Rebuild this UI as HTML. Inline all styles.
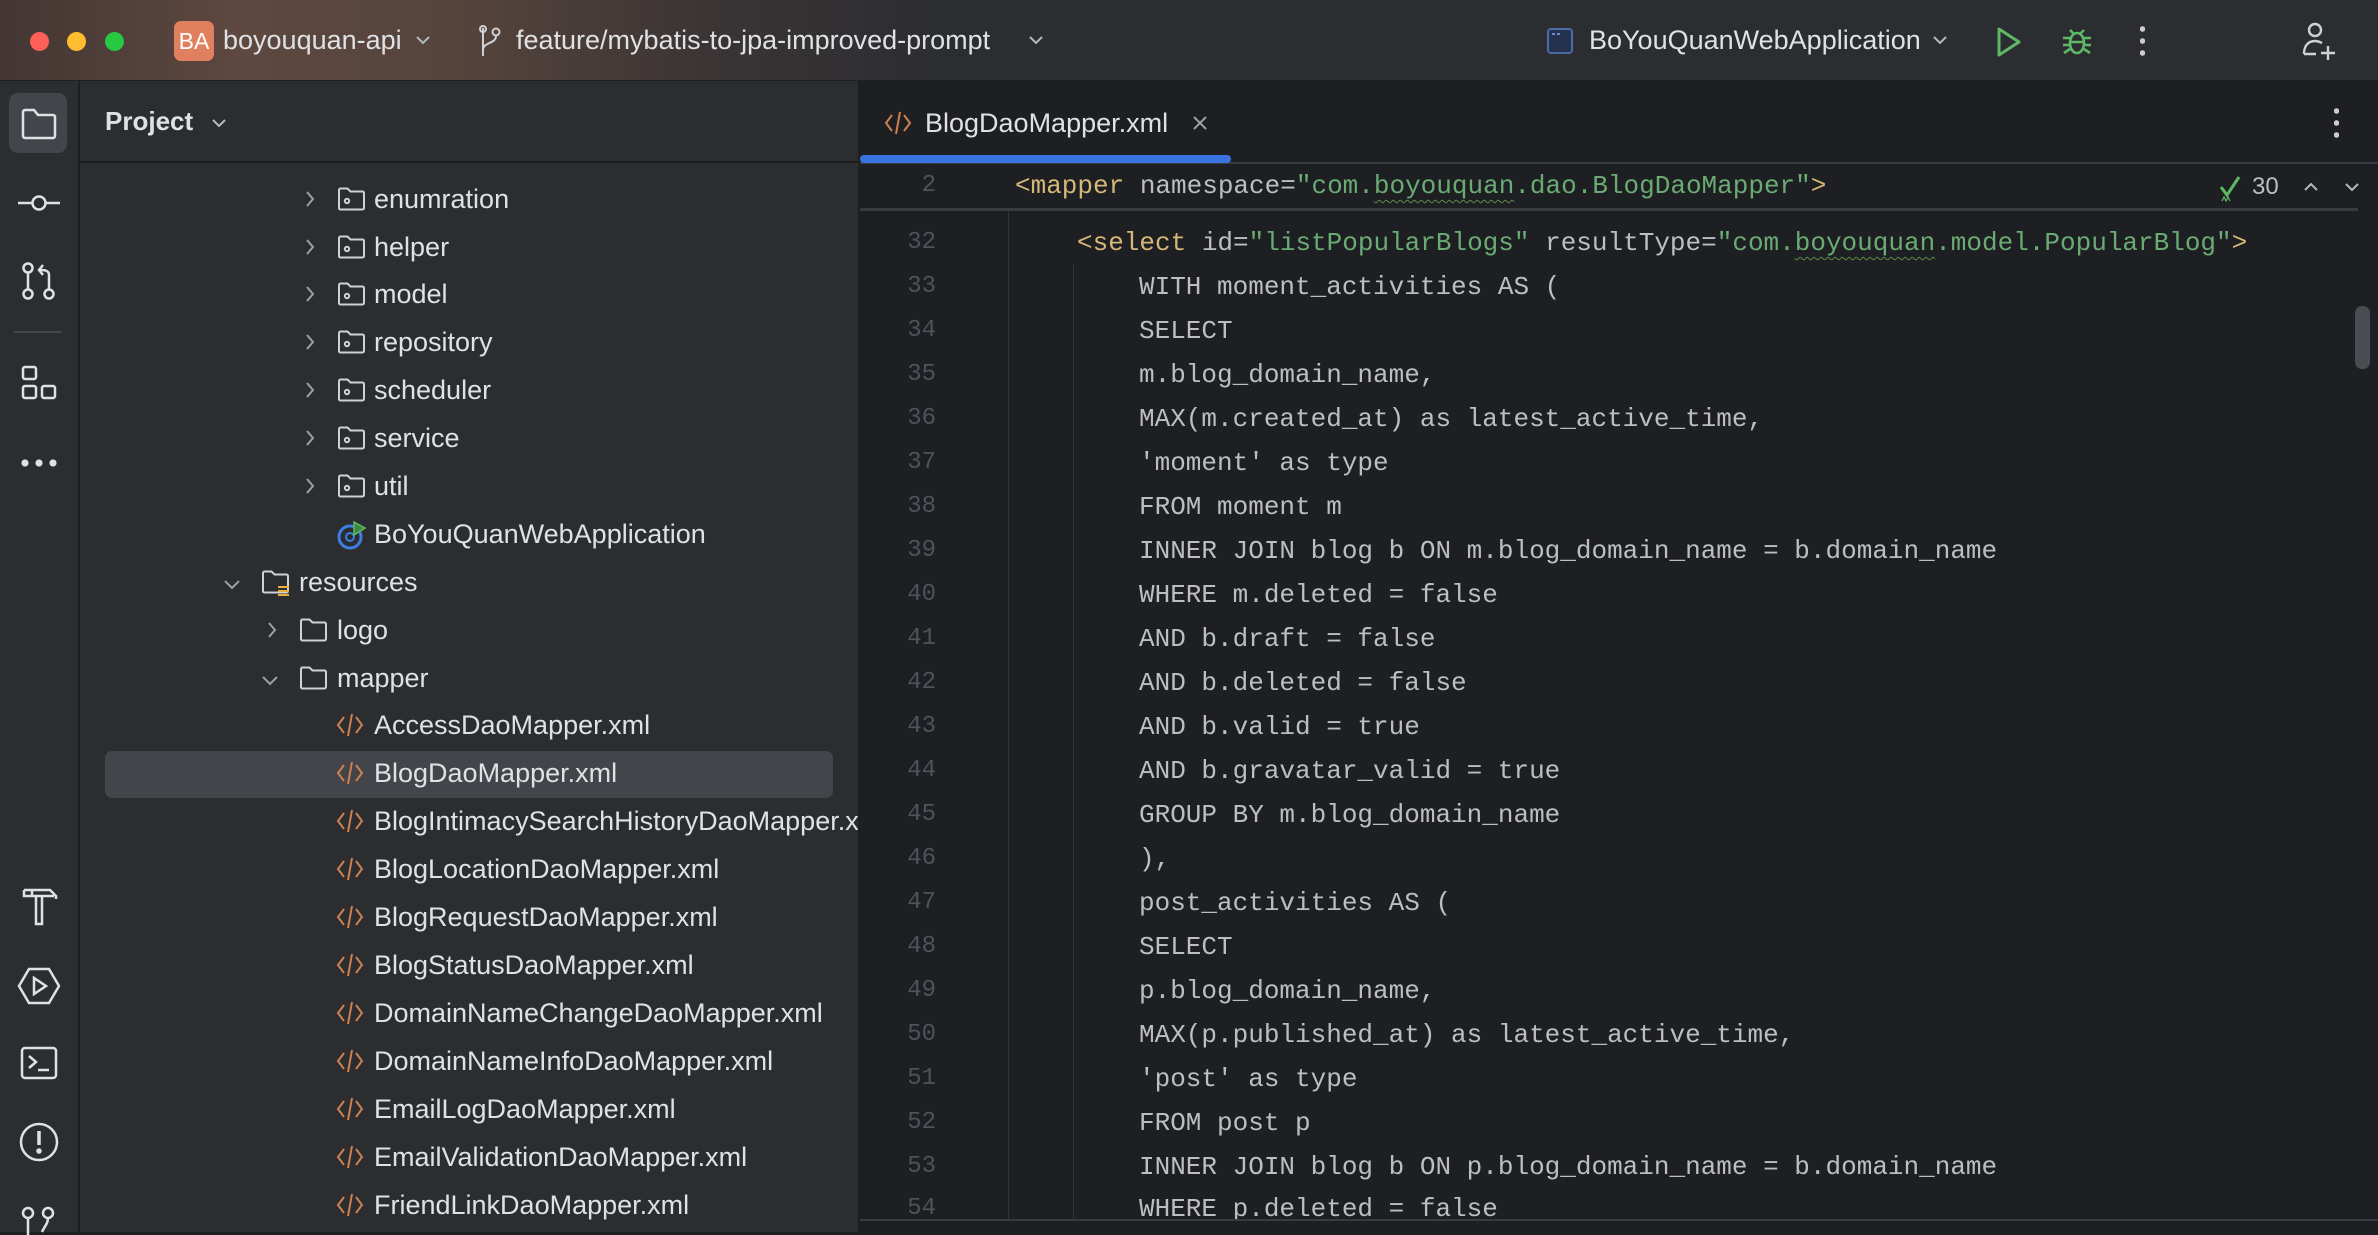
<!DOCTYPE html>
<html><head><meta charset="utf-8"><style>
*{margin:0;padding:0;box-sizing:border-box}
body{width:2378px;height:1232px;overflow:hidden;background:#1e1f22;font-family:"Liberation Sans",sans-serif;color:#dfe1e5;position:relative}
.abs{position:absolute}
#title{left:0;top:0;width:2378px;height:80px;background:linear-gradient(90deg,#433633 0%,#5e4840 10%,#54433c 20%,#3a3434 30%,#2b2d30 40%,#2b2d30 100%)}
.tl{position:absolute;top:32px;width:19px;height:19px;border-radius:50%}
.tt{position:absolute;font-size:27px;color:#dfe1e5;line-height:30px;top:25px;white-space:nowrap}
#strip{left:0;top:81px;width:79px;height:1151px;background:#2b2d30;border-right:1px solid #1e1f22}
#panel{left:80px;top:81px;width:778px;height:1151px;background:#2b2d30}
.row{position:absolute;font-size:27px;line-height:48px;height:48px;white-space:nowrap;color:#dfe1e5}
.code{position:absolute;font-family:"Liberation Mono",monospace;font-size:26px;line-height:44px;height:44px;white-space:pre;color:#bcbec4}
.ln{position:absolute;font-family:"Liberation Mono",monospace;font-size:24px;line-height:44px;height:44px;color:#4e535b;width:80px;text-align:right;left:856px}
.tag{color:#d5b778}.str{color:#6aab73}
.sq{text-decoration:underline wavy #5f8b4c;text-underline-offset:6px;text-decoration-thickness:1px}
</style></head><body>
<div id="title" class="abs">
 <div class="tl" style="left:30px;background:#fe5f57"></div>
 <div class="tl" style="left:67px;background:#febc2e"></div>
 <div class="tl" style="left:105px;background:#28c840"></div>
 <div class="abs" style="left:174px;top:21px;width:40px;height:40px;border-radius:7px;background:#e0805e;color:#fff;font-size:23px;line-height:40px;text-align:center">BA</div>
 <div class="tt" style="left:223px">boyouquan-api</div>
 <svg class="abs" style="left:414px;top:33px" width="18" height="14"><path d="M3 4l6 6 6-6" stroke="#b4b8bf" stroke-width="2" fill="none"/></svg>
 <svg class="abs" style="left:476px;top:24px" width="30" height="34" fill="none" stroke="#cfd1d6" stroke-width="2"><path d="M7 4v28"/><circle cx="7" cy="5" r="3"/><circle cx="20" cy="8" r="3.5"/><path d="M20 12c0 8-13 6-13 14"/></svg>
 <div class="tt" style="left:516px">feature/mybatis-to-jpa-improved-prompt</div>
 <svg class="abs" style="left:1027px;top:33px" width="18" height="14"><path d="M3 4l6 6 6-6" stroke="#b4b8bf" stroke-width="2" fill="none"/></svg>
 <svg class="abs" style="left:1546px;top:27px" width="28" height="28"><rect x="2" y="2" width="24" height="24" rx="3" fill="#25324d" stroke="#4a6aa8" stroke-width="2"/><rect x="6" y="6" width="3" height="2" fill="#6d8ccc"/><rect x="11" y="6" width="3" height="2" fill="#6d8ccc"/></svg>
 <div class="tt" style="left:1589px">BoYouQuanWebApplication</div>
 <svg class="abs" style="left:1931px;top:33px" width="18" height="14"><path d="M3 4l6 6 6-6" stroke="#b4b8bf" stroke-width="2" fill="none"/></svg>
 <svg class="abs" style="left:1994px;top:26px" width="30" height="32"><path d="M5 3l20 13L5 29z" stroke="#5fb865" stroke-width="3" fill="none" stroke-linejoin="round"/></svg>
 <svg class="abs" style="left:2060px;top:24px" width="34" height="34" fill="none" stroke="#5fb865" stroke-width="2.6"><ellipse cx="17" cy="19" rx="7" ry="10"/><path d="M10 6l4 4M24 6l-4 4M3 14h7M24 14h7M3 21h7M24 21h7M4 29l6-4M30 29l-6-4M10 18h14"/></svg>
 <div class="abs" style="left:2140px;top:26px;width:5px;height:30px;background:radial-gradient(circle at 2.5px 3px,#ccc 2.5px,transparent 3px),radial-gradient(circle at 2.5px 15px,#ccc 2.5px,transparent 3px),radial-gradient(circle at 2.5px 27px,#ccc 2.5px,transparent 3px)"></div>
 <svg class="abs" style="left:2300px;top:20px" width="40" height="42" fill="none" stroke="#cfd1d6" stroke-width="2.4"><circle cx="15" cy="10" r="6"/><path d="M4 34c0-8 4-13 11-13 3 0 5 1 7 2M4 34h12M28 26v14M21 33h14"/></svg>
</div>
<div class="abs" style="left:0;top:80px;width:2378px;height:1px;background:#1e1f22"></div>

<div id="strip" class="abs">
 <div class="abs" style="left:9px;top:12px;width:58px;height:60px;border-radius:9px;background:#43454a"></div>
 <svg class="abs" style="left:20px;top:26px" width="38" height="34" fill="none" stroke="#dfe1e5" stroke-width="2.5"><path d="M3 5a2 2 0 012-2h9l4 5h15a2 2 0 012 2v19a2 2 0 01-2 2H5a2 2 0 01-2-2z"/></svg>
 <svg class="abs" style="left:17px;top:110px" width="44" height="24" fill="none" stroke="#dfe1e5" stroke-width="2.5"><circle cx="22" cy="12" r="6.5"/><path d="M1 12h14M29 12h14"/></svg>
 <svg class="abs" style="left:20px;top:180px" width="38" height="40" fill="none" stroke="#dfe1e5" stroke-width="2.5"><circle cx="8" cy="7" r="4.5"/><circle cx="8" cy="33" r="4.5"/><circle cx="29" cy="33" r="4.5"/><path d="M8 12v16M29 28v-14c0-4-3-5-8-5h-1M23 4l-4 5 4 5"/></svg>
 <div class="abs" style="left:14px;top:250px;width:48px;height:2px;background:#43454a"></div>
 <svg class="abs" style="left:20px;top:283px" width="38" height="40" fill="none" stroke="#dfe1e5" stroke-width="2.5"><rect x="3" y="3" width="13" height="12" rx="2"/><rect x="3" y="22" width="13" height="12" rx="2"/><rect x="22" y="22" width="13" height="12" rx="2"/></svg>
 <div class="abs" style="left:21px;top:378px;width:36px;height:8px;background:radial-gradient(circle at 4px 4px,#dfe1e5 3.3px,transparent 3.8px) 0 0/14px 8px repeat-x"></div>
 <svg class="abs" style="left:20px;top:805px" width="40" height="40" fill="none" stroke="#dfe1e5" stroke-width="2.5"><path d="M4 4h26l6 6v3M4 4v6h8M12 4v6M16 10v28h6V10M12 10h22"/></svg>
 <svg class="abs" style="left:17px;top:885px" width="44" height="40" fill="none" stroke="#dfe1e5" stroke-width="2.5"><path d="M12 3h20l10 17-10 17H12L2 20z"/><path d="M17 12v16l12-8z"/></svg>
 <svg class="abs" style="left:19px;top:963px" width="40" height="40" fill="none" stroke="#dfe1e5" stroke-width="2.5"><rect x="3" y="4" width="34" height="30" rx="3"/><path d="M10 12l7 6-7 6M19 26h11"/></svg>
 <svg class="abs" style="left:18px;top:1040px" width="42" height="42" fill="none" stroke="#dfe1e5" stroke-width="2.5"><circle cx="21" cy="21" r="18"/><path d="M21 10v14" stroke-width="3.5"/><circle cx="21" cy="30" r="1.5" fill="#dfe1e5"/></svg>
 <svg class="abs" style="left:20px;top:1124px" width="40" height="30" fill="none" stroke="#dfe1e5" stroke-width="2.5"><circle cx="8" cy="8" r="5"/><circle cx="28" cy="8" r="5"/><path d="M8 13v17M28 13c0 6-4 9-6 14"/></svg>
</div>

<div id="panel" class="abs">
 <div class="abs" style="left:25px;top:25px;font-size:26px;font-weight:bold;color:#dfe1e5">Project</div>
 <svg class="abs" style="left:130px;top:35px" width="18" height="14"><path d="M3 4l6 6 6-6" stroke="#b4b8bf" stroke-width="2" fill="none"/></svg>
 <div class="abs" style="left:0;top:80px;width:778px;height:2px;background:#1e1f22"></div>
</div>

<div id="tree">
<svg width="0" height="0" style="position:absolute"><defs>
<g id="pkg" fill="none" stroke="#cfd1d6" stroke-width="2"><path d="M2 4a1.5 1.5 0 011.5-1.5h7l3 3h12a1.5 1.5 0 011.5 1.5v15a1.5 1.5 0 01-1.5 1.5H3.5A1.5 1.5 0 012 21.5z"/><circle cx="10" cy="15" r="2.2"/></g>
<g id="fld" fill="none" stroke="#cfd1d6" stroke-width="2"><path d="M2 4a1.5 1.5 0 011.5-1.5h7l3 3h12a1.5 1.5 0 011.5 1.5v15a1.5 1.5 0 01-1.5 1.5H3.5A1.5 1.5 0 012 21.5z"/></g>
<g id="xml" fill="none" stroke="#d08050" stroke-width="2"><path d="M8 5l-6 8 6 8M20 5l6 8-6 8M16 2l-4 22"/></g>
<g id="cr" fill="none" stroke="#9da0a8" stroke-width="2"><path d="M5 2l6 7-6 7"/></g>
<g id="cd" fill="none" stroke="#9da0a8" stroke-width="2"><path d="M1 5l7 7 7-7"/></g>
</defs></svg>

<div class="abs" style="left:105px;top:751px;width:728px;height:47px;border-radius:7px;background:#43454a"></div>

<svg class="abs" style="left:302px;top:190px" width="16" height="18"><use href="#cr"/></svg><svg class="abs" style="left:337px;top:186px" width="30" height="26"><use href="#pkg"/></svg><div class="row" style="left:374px;top:175px">enumration</div>
<svg class="abs" style="left:302px;top:238px" width="16" height="18"><use href="#cr"/></svg><svg class="abs" style="left:337px;top:234px" width="30" height="26"><use href="#pkg"/></svg><div class="row" style="left:374px;top:223px">helper</div>
<svg class="abs" style="left:302px;top:285px" width="16" height="18"><use href="#cr"/></svg><svg class="abs" style="left:337px;top:281px" width="30" height="26"><use href="#pkg"/></svg><div class="row" style="left:374px;top:270px">model</div>
<svg class="abs" style="left:302px;top:333px" width="16" height="18"><use href="#cr"/></svg><svg class="abs" style="left:337px;top:329px" width="30" height="26"><use href="#pkg"/></svg><div class="row" style="left:374px;top:318px">repository</div>
<svg class="abs" style="left:302px;top:381px" width="16" height="18"><use href="#cr"/></svg><svg class="abs" style="left:337px;top:377px" width="30" height="26"><use href="#pkg"/></svg><div class="row" style="left:374px;top:366px">scheduler</div>
<svg class="abs" style="left:302px;top:429px" width="16" height="18"><use href="#cr"/></svg><svg class="abs" style="left:337px;top:425px" width="30" height="26"><use href="#pkg"/></svg><div class="row" style="left:374px;top:414px">service</div>
<svg class="abs" style="left:302px;top:477px" width="16" height="18"><use href="#cr"/></svg><svg class="abs" style="left:337px;top:473px" width="30" height="26"><use href="#pkg"/></svg><div class="row" style="left:374px;top:462px">util</div>
<svg class="abs" style="left:336px;top:519px" width="32" height="32"><circle cx="14" cy="18" r="11" fill="none" stroke="#3d7ee0" stroke-width="3"/><circle cx="14" cy="18" r="4" fill="none" stroke="#3d7ee0" stroke-width="2"/><path d="M18 3l11 6-11 7z" fill="#3b8a3f" stroke="#5fb865" stroke-width="1.5"/></svg><div class="row" style="left:374px;top:510px">BoYouQuanWebApplication</div>
<svg class="abs" style="left:224px;top:576px" width="16" height="16"><use href="#cd"/></svg><svg class="abs" style="left:261px;top:569px" width="32" height="28"><use href="#fld"/><path d="M17 18h11M17 22h11M17 26h11" stroke="#e6b03c" stroke-width="2"/></svg><div class="row" style="left:299px;top:558px">resources</div>
<svg class="abs" style="left:264px;top:621px" width="16" height="18"><use href="#cr"/></svg><svg class="abs" style="left:299px;top:617px" width="30" height="26"><use href="#fld"/></svg><div class="row" style="left:337px;top:606px">logo</div>
<svg class="abs" style="left:262px;top:672px" width="16" height="16"><use href="#cd"/></svg><svg class="abs" style="left:299px;top:665px" width="30" height="26"><use href="#fld"/></svg><div class="row" style="left:337px;top:654px">mapper</div>

<svg class="abs" style="left:336px;top:712px" width="30" height="26"><use href="#xml"/></svg><div class="row" style="left:374px;top:701px">AccessDaoMapper.xml</div>
<svg class="abs" style="left:336px;top:760px" width="30" height="26"><use href="#xml"/></svg><div class="row" style="left:374px;top:749px">BlogDaoMapper.xml</div>
<div style="position:absolute;left:0;top:0;width:858px;height:1232px;overflow:hidden">
<svg class="abs" style="left:336px;top:808px" width="30" height="26"><use href="#xml"/></svg><div class="row" style="left:374px;top:797px">BlogIntimacySearchHistoryDaoMapper.xml</div>
</div>
<svg class="abs" style="left:336px;top:856px" width="30" height="26"><use href="#xml"/></svg><div class="row" style="left:374px;top:845px">BlogLocationDaoMapper.xml</div>
<svg class="abs" style="left:336px;top:904px" width="30" height="26"><use href="#xml"/></svg><div class="row" style="left:374px;top:893px">BlogRequestDaoMapper.xml</div>
<svg class="abs" style="left:336px;top:952px" width="30" height="26"><use href="#xml"/></svg><div class="row" style="left:374px;top:941px">BlogStatusDaoMapper.xml</div>
<svg class="abs" style="left:336px;top:1000px" width="30" height="26"><use href="#xml"/></svg><div class="row" style="left:374px;top:989px">DomainNameChangeDaoMapper.xml</div>
<svg class="abs" style="left:336px;top:1048px" width="30" height="26"><use href="#xml"/></svg><div class="row" style="left:374px;top:1037px">DomainNameInfoDaoMapper.xml</div>
<svg class="abs" style="left:336px;top:1096px" width="30" height="26"><use href="#xml"/></svg><div class="row" style="left:374px;top:1085px">EmailLogDaoMapper.xml</div>
<svg class="abs" style="left:336px;top:1144px" width="30" height="26"><use href="#xml"/></svg><div class="row" style="left:374px;top:1133px">EmailValidationDaoMapper.xml</div>
<svg class="abs" style="left:336px;top:1192px" width="30" height="26"><use href="#xml"/></svg><div class="row" style="left:374px;top:1181px">FriendLinkDaoMapper.xml</div>
</div>

<div class="abs" style="left:858px;top:81px;width:2px;height:1151px;background:#1e1f22"></div>
<svg class="abs" style="left:884px;top:110px" width="30" height="26"><use href="#xml"/></svg>
<div class="abs" style="left:925px;top:107px;font-size:27px;line-height:32px;color:#dfe1e5">BlogDaoMapper.xml</div>
<svg class="abs" style="left:1191px;top:114px" width="18" height="18"><path d="M3 3l12 12M15 3L3 15" stroke="#9da0a8" stroke-width="2"/></svg>
<div class="abs" style="left:2334px;top:108px;width:5px;height:30px;background:radial-gradient(circle at 2.5px 3px,#ccc 2.5px,transparent 3px),radial-gradient(circle at 2.5px 15px,#ccc 2.5px,transparent 3px),radial-gradient(circle at 2.5px 27px,#ccc 2.5px,transparent 3px)"></div>
<div class="abs" style="left:860px;top:162px;width:1518px;height:2px;background:#393b40"></div>
<div class="abs" style="left:860px;top:155px;width:371px;height:8px;border-radius:4px;background:#3b74e0"></div>

<div class="ln" style="top:164px">2</div>
<div class="code" style="left:1015px;top:164px"><span class="tag">&lt;mapper</span> namespace=<span class="str">"com.<span class="sq">boyouquan</span>.dao.BlogDaoMapper"</span><span class="tag">&gt;</span></div>
<svg class="abs" style="left:2218px;top:174px" width="26" height="30"><path d="M3 13l6 8L21 3" stroke="#5fb865" stroke-width="3" fill="none"/><path d="M4 27l2-4 2 4 2-4 2 4" stroke="#5fb865" stroke-width="1.2" fill="none"/></svg>
<div class="abs" style="left:2252px;top:172px;font-size:24px;line-height:30px;color:#bcbec4">30</div>
<svg class="abs" style="left:2302px;top:180px" width="18" height="14"><path d="M3 10l6-6 6 6" stroke="#b4b8bf" stroke-width="2" fill="none"/></svg>
<svg class="abs" style="left:2343px;top:180px" width="18" height="14"><path d="M3 4l6 6 6-6" stroke="#b4b8bf" stroke-width="2" fill="none"/></svg>
<div class="abs" style="left:860px;top:208px;width:1498px;height:3px;background:#393b40"></div>

<div class="abs" style="left:1008px;top:211px;width:1px;height:1009px;background:#313338"></div>
<div class="abs" style="left:1073px;top:265px;width:1px;height:955px;background:#313338"></div>

<div class="ln" style="top:221px">32</div><div class="code" style="left:1077px;top:221px"><span class="tag">&lt;select</span> id=<span class="str">"listPopularBlogs"</span> resultType=<span class="str">"com.<span class="sq">boyouquan</span>.model.PopularBlog"</span><span class="tag">&gt;</span></div>
<div class="ln" style="top:265px">33</div><div class="code" style="left:1139px;top:265px">WITH moment_activities AS (</div>
<div class="ln" style="top:309px">34</div><div class="code" style="left:1139px;top:309px">SELECT</div>
<div class="ln" style="top:353px">35</div><div class="code" style="left:1139px;top:353px">m.blog_domain_name,</div>
<div class="ln" style="top:397px">36</div><div class="code" style="left:1139px;top:397px">MAX(m.created_at) as latest_active_time,</div>
<div class="ln" style="top:441px">37</div><div class="code" style="left:1139px;top:441px">'moment' as type</div>
<div class="ln" style="top:485px">38</div><div class="code" style="left:1139px;top:485px">FROM moment m</div>
<div class="ln" style="top:529px">39</div><div class="code" style="left:1139px;top:529px">INNER JOIN blog b ON m.blog_domain_name = b.domain_name</div>
<div class="ln" style="top:573px">40</div><div class="code" style="left:1139px;top:573px">WHERE m.deleted = false</div>
<div class="ln" style="top:617px">41</div><div class="code" style="left:1139px;top:617px">AND b.draft = false</div>
<div class="ln" style="top:661px">42</div><div class="code" style="left:1139px;top:661px">AND b.deleted = false</div>
<div class="ln" style="top:705px">43</div><div class="code" style="left:1139px;top:705px">AND b.valid = true</div>
<div class="ln" style="top:749px">44</div><div class="code" style="left:1139px;top:749px">AND b.gravatar_valid = true</div>
<div class="ln" style="top:793px">45</div><div class="code" style="left:1139px;top:793px">GROUP BY m.blog_domain_name</div>
<div class="ln" style="top:837px">46</div><div class="code" style="left:1139px;top:837px">),</div>
<div class="ln" style="top:881px">47</div><div class="code" style="left:1139px;top:881px">post_activities AS (</div>
<div class="ln" style="top:925px">48</div><div class="code" style="left:1139px;top:925px">SELECT</div>
<div class="ln" style="top:969px">49</div><div class="code" style="left:1139px;top:969px">p.blog_domain_name,</div>
<div class="ln" style="top:1013px">50</div><div class="code" style="left:1139px;top:1013px">MAX(p.published_at) as latest_active_time,</div>
<div class="ln" style="top:1057px">51</div><div class="code" style="left:1139px;top:1057px">'post' as type</div>
<div class="ln" style="top:1101px">52</div><div class="code" style="left:1139px;top:1101px">FROM post p</div>
<div class="ln" style="top:1145px">53</div><div class="code" style="left:1139px;top:1145px">INNER JOIN blog b ON p.blog_domain_name = b.domain_name</div>
<div class="ln" style="top:1187px">54</div><div class="code" style="left:1139px;top:1187px">WHERE p.deleted = false</div>
<div class="abs" style="left:860px;top:1219px;width:1518px;height:13px;background:#1e1f22;border-top:2px solid #393b40"></div>
<div class="abs" style="left:2355px;top:306px;width:15px;height:63px;border-radius:7px;background:#4a4c51"></div>
</body></html>
